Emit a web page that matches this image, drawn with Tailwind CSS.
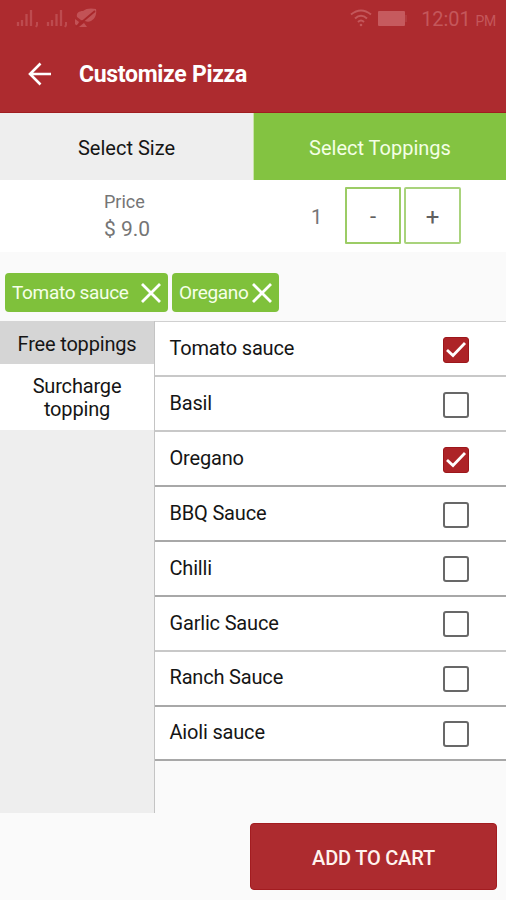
<!DOCTYPE html>
<html lang="en">
<head>
<meta charset="utf-8">
<title>Customize Pizza</title>
<script src="https://cdn.jsdelivr.net/npm/@tailwindcss/browser@4"></script>
</head>
<body class="bg-[#fafafa] font-[Roboto,sans-serif] text-[#151515]">
<div class="flex h-[900px] w-[506px] flex-col overflow-hidden">
  <header class="h-[113px] shrink-0 border-b border-[#a01d20] bg-[#ad2b2f]">
    <div class="flex h-[36px] items-center pl-[16px] pr-[10px]">
      <svg class="h-[20px] w-[82px]" viewBox="0 0 82 20" fill="none" stroke="#bd4b4f" stroke-width="2.300">
        <path d="M2 18v-4M6 18v-6M10.500 18V6M15 18V2M32 18v-4M36 18v-6M40.500 18V6M45 18V2"/>
        <path d="M21 14v3l-1 2M50 14v3l-1 2" stroke-width="2"/>
        <g fill="#c25256" stroke="none"><path d="M61 9c-1-4 2-6 6-6 3-3 9-3 13-2 1 5-1 10-5 12-2 1-4 1-6 0l-4-1zM59 11l4 3-2 4-2-2zM63 19l5-4 3 4z"/></g>
        <path d="M60 19L79 3" stroke="#a9272b" stroke-width="1.800"/>
      </svg>
      <svg class="ml-auto h-[18px] w-[22px]" viewBox="0 0 22 18" fill="none" stroke="#c4575b" stroke-width="2">
        <path d="M1 5.500Q11-2.500 21 5.500M5 9.500Q11 4 17 9.500M8 13Q11 10 14 13"/><circle cx="11" cy="16" r="1.300" fill="#c4575b" stroke="none"/>
      </svg>
      <div class="ml-[6px] h-[15px] w-[27px] rounded-[1px] bg-[#c65a5e]"></div>
      <div class="h-[7px] w-[2px] bg-[#b4393d]"></div>
      <div class="ml-[14px] flex items-baseline gap-[5px] pt-[2px] text-[#c4575b]"><span class="text-[20px] leading-[24px] tracking-[-0.1px]">12:01</span><span class="text-[14px] tracking-[-0.3px]">PM</span></div>
    </div>
    <div class="flex h-[76px] items-center pl-[28px]">
      <svg class="h-[24px] w-[24px]" viewBox="0 0 24 24" fill="none" stroke="#fff" stroke-width="2.600"><path d="M23 12H2.500M12.500 1.500L2 12l10.500 10.500"/></svg>
      <h1 class="ml-[27px] pt-[2px] text-[23px] font-bold tracking-[-0.3px] text-white">Customize Pizza</h1>
    </div>
  </header>
  <nav class="flex h-[67px] shrink-0 text-[20px]">
    <div class="flex w-[253px] items-center justify-center bg-[#eeeeee] pt-[3px]">Select Size</div>
    <div class="flex w-[253px] items-center justify-center border-l border-[#c8e4a8] bg-[#83c341] pt-[3px] text-[#f4ffe5]">Select Toppings</div>
  </nav>
  <section class="flex h-[72px] shrink-0 bg-white text-[#757575]">
    <div class="w-[253px] pl-[104px] pt-[10px]"><div class="text-[18px] leading-[24px]">Price</div><div class="mt-[2px] text-[21px] leading-[26px]">$ 9.0</div></div>
    <div class="flex pl-[58px] pt-[7px]">
      <span class="w-[34px] text-[20px] leading-[60px]">1</span>
      <button class="h-[57px] w-[56px] rounded-[1px] border-2 border-[#9ccc65] pt-[2px] text-[22px] text-[#606060]">-</button>
      <button class="ml-[3px] h-[57px] w-[57px] rounded-[2px] border-2 border-[#a9d37c] pt-[2px] text-[24px] text-[#606060]">+</button>
    </div>
  </section>
  <section class="flex h-[69px] shrink-0 gap-[4px] pl-[5px] pt-[21px] text-[19px] tracking-[-0.33px] text-[#f6ffe9]">
    <div class="flex h-[39px] w-[163px] items-center justify-between rounded-[4px] bg-[#7fc13b] pl-[7px] pr-[7px]"><span class="pt-px">Tomato sauce</span><svg class="h-[20px] w-[20px]" viewBox="0 0 20 20" stroke="#fff" stroke-width="2.800"><path d="M1 1l18 18M19 1L1 19"/></svg></div>
    <div class="flex h-[39px] w-[107px] items-center justify-between rounded-[4px] bg-[#7fc13b] pl-[7px] pr-[7px]"><span class="pt-px">Oregano</span><svg class="h-[20px] w-[20px]" viewBox="0 0 20 20" stroke="#fff" stroke-width="2.800"><path d="M1 1l18 18M19 1L1 19"/></svg></div>
  </section>
  <main class="flex h-[492px] shrink-0 text-[20px] tracking-[-0.18px]">
    <aside class="w-[155px] border-r border-[#c4c4c4] bg-[#eeeeee] text-center">
      <div class="h-[43px] bg-[#d5d5d5] leading-[47px]">Free toppings</div>
      <div class="h-[66px] bg-white pt-[11px] leading-[23px]">Surcharge<br>topping</div>
    </aside>
    <ul id="list" class="w-[351px] border-t border-[#d0d0d0]"></ul>
  </main>
  <footer class="flex justify-end pr-[9px] pt-[10px]">
    <button class="h-[67px] w-[247px] rounded-[4px] border border-[#a31c20] bg-[#ad2b2f] pt-[2px] text-[20px] font-medium tracking-[-0.2px] text-[#fff3ee]">ADD TO CART</button>
  </footer>
</div>
<script>
const items=[['Tomato sauce',1],['Basil',0],['Oregano',1],['BBQ Sauce',0],['Chilli',0],['Garlic Sauce',0],['Ranch Sauce',0],['Aioli sauce',0]];
const on='<svg class="h-[26px] w-[26px]" viewBox="0 0 26 26"><rect x=".5" y=".5" width="25" height="25" rx="2.500" fill="#ad2327" stroke="#9c171b"/><path d="M4 13l6 5.500L22 6" fill="none" stroke="#fff" stroke-width="2.800"/></svg>';
const off='<span class="h-[26px] w-[26px] rounded-[3px] border-2 border-[#686868]"></span>';
document.getElementById('list').innerHTML=items.map(([n,c],i)=>`<li class="flex ${i?'h-[54.860px]':'h-[55.400px]'} items-center justify-between border-b-2 ${i<2||i===5?'border-[#c8c8c8]':'border-[#a8a8a8]'} bg-white pl-[14.500px] pr-[37px]"><span class="pb-[1.500px]">${n}</span><span class="flex pt-[2px]">${c?on:off}</span></li>`).join('');
</script>
</body>
</html>
